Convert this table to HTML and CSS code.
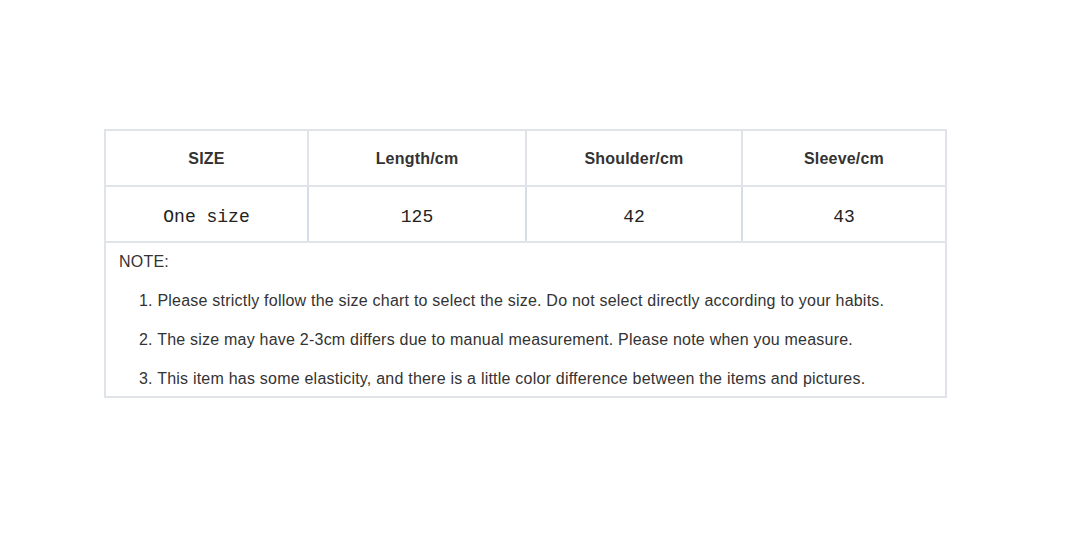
FILE: index.html
```html
<!DOCTYPE html>
<html>
<head>
<meta charset="utf-8">
<link rel="stylesheet" href="styles.css">
</head>
<body>
<div class="page">
<table class="chart">
  <colgroup>
    <col class="c1"><col class="c2"><col class="c3"><col class="c4">
  </colgroup>
  <tr class="head">
    <th>SIZE</th><th>Length/cm</th><th>Shoulder/cm</th><th>Sleeve/cm</th>
  </tr>
  <tr class="vals">
    <td>One size</td><td>125</td><td>42</td><td>43</td>
  </tr>
  <tr>
    <td class="note" colspan="4">
      <p class="note-title">NOTE:</p>
      <p class="item">1. Please strictly follow the size chart to select the size. Do not select directly according to your habits.</p>
      <p class="item">2. The size may have 2-3cm differs due to manual measurement. Please note when you measure.</p>
      <p class="item">3. This item has some elasticity, and there is a little color difference between the items and pictures.</p>
    </td>
  </tr>
</table>
</div>
</body>
</html>
```
FILE: styles.css
```css
html, body {
  margin: 0;
  padding: 0;
  background: #fff;
}
.page {
  padding: 129px 0 0 104px;
}
.chart {
  border-collapse: collapse;
  table-layout: fixed;
  width: 843px;
  font-family: "Liberation Sans", Arial, sans-serif;
  color: #333;
}
.c1 { width: 203px; }
.c2 { width: 218px; }
.c3 { width: 216px; }
.c4 { width: 204px; }
.chart th, .chart td {
  border: 2px solid #e0e3e7;
  padding: 0;
  text-align: center;
}
.head th {
  height: 52px;
  padding-top: 2px;
  font-size: 16px;
  font-weight: bold;
  letter-spacing: 0.2px;
}
.vals td {
  height: 48px;
  padding-top: 6px;
  font-family: "Liberation Mono", "Courier New", monospace;
  font-size: 18px;
  color: #222;
  border-left-color: #d5dde8;
  border-right-color: #d5dde8;
}
.vals td:first-child { border-left-color: #e0e3e7; }
.vals td:last-child { border-right-color: #e0e3e7; }
.chart td.note {
  text-align: left;
  padding: 7px 13px 5px 13px;
  font-size: 16px;
  letter-spacing: 0.22px;
}
.note p {
  margin: 0;
  line-height: 24px;
}
.note .item {
  margin-top: 15px;
  padding-left: 20px;
}
```
